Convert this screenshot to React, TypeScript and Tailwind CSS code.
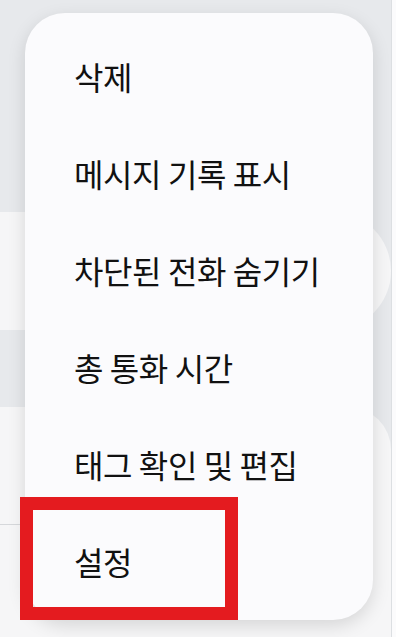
import React from 'react'

const items = ['삭제', '메시지 기록 표시', '차단된 전화 숨기기', '총 통화 시간', '태그 확인 및 편집', '설정']

export default function App() {
  return (
    <div className="relative w-[396px] h-[637px] overflow-hidden bg-[#e7e9ec] font-['Noto_Sans_CJK_KR','Noto_Sans',sans-serif]">
      {/* page behind the menu */}
      <div className="flex h-full">
        <div className="flex flex-col w-[392px] border-r border-[#dcdfe2]">
          <div className="h-[212px]" />
          <div className="h-[118px] bg-[#f6f6f7] rounded-r-full" />
          <div className="h-[77px]" />
          <div className="flex-1 flex flex-col bg-[#f6f6f7] rounded-tr-[43px]">
            <div className="h-[118px] mr-[40px] border-b border-[#d6d8db]" />
            <div className="flex-1" />
          </div>
        </div>
        <div className="flex-1 bg-[#fbfbfc]" />
      </div>

      {/* popup menu */}
      <div className="absolute left-[25px] top-[13px] w-[348px] h-[607px] rounded-[40px] bg-[#fbfbfd] shadow-[0_6px_18px_rgba(0,0,0,0.13)] pt-[14px] pl-[49px]">
        <ul className="flex flex-col">
          {items.map((label) => (
            <li key={label} className="h-[97px] flex items-center text-[32px] font-normal text-[#111111] leading-none tracking-[-0.4px]">
              {label}
            </li>
          ))}
        </ul>
      </div>

      {/* highlight box */}
      <div className="absolute left-[20px] top-[497px] w-[218px] h-[123px] border-[13px] border-[#e41b1f]" />
    </div>
  )
}
